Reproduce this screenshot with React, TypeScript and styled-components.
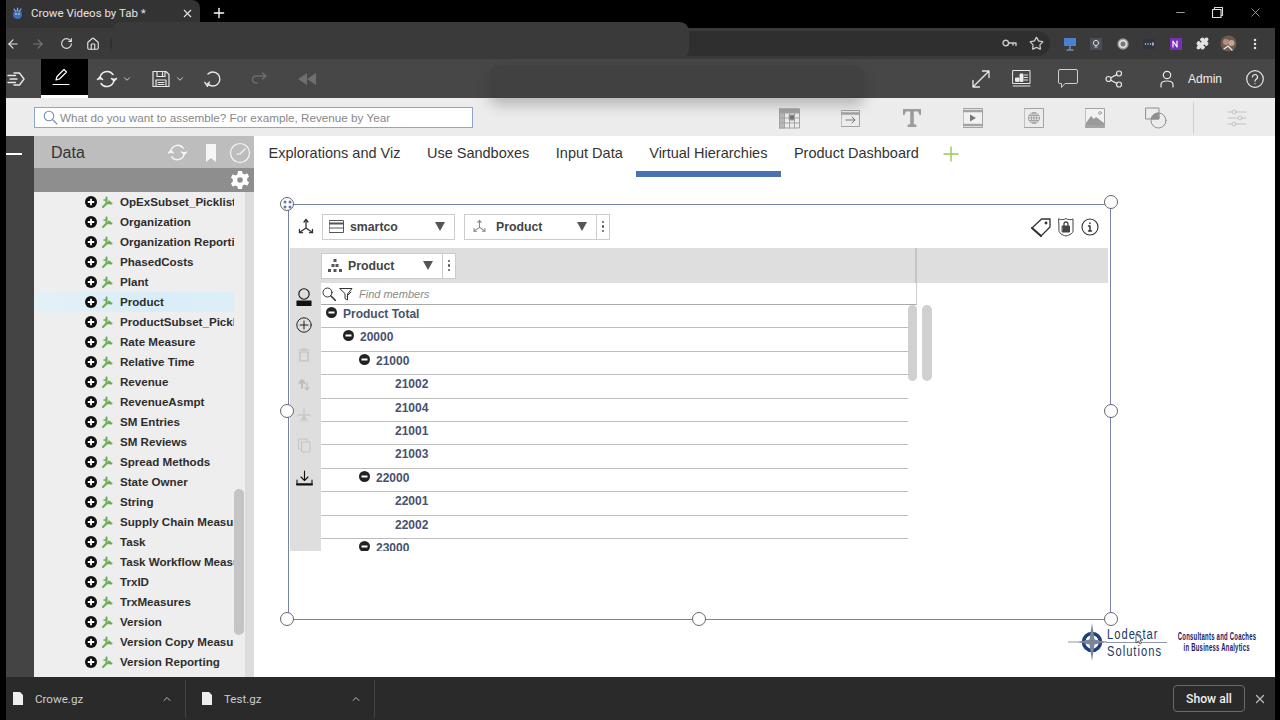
import React from "react";
import styled, { createGlobalStyle } from "styled-components";
import { ArrowLeft, ArrowRight, RotateCw, Home, Star, Puzzle, EllipsisVertical, Minus, X, Plus, ChevronDown, ChevronUp } from "lucide-react";

const Global = createGlobalStyle`
  html, body { margin: 0; padding: 0; background: #000; }
  * { box-sizing: border-box; }
  #root { width: 1280px; height: 720px; overflow: hidden; }
`;

const Page = styled.div`
  position: relative;
  width: 1280px; height: 720px; background: #000; overflow: hidden;
  font-family: "Liberation Sans", Arial, sans-serif;
  display: flex; flex-direction: column;
`;
const TabStrip = styled.div`
  height: 28px; padding-left: 6px; display: flex; align-items: stretch; color: #fff; flex: none;
`;
const BrowserTab = styled.div`
  width: 194px; height: 28px; background: #333; border-top-right-radius: 8px;
  display: flex; align-items: center; padding: 0 6px 2px 5px; font: 11.5px Roboto, "Liberation Sans", sans-serif; color: #e4e4e4;
`;
const TabTitle = styled.span` margin-left: 7px; flex: 1; white-space: nowrap; `;
const NewTab = styled.div` margin-left: 11px; display: flex; align-items: center; padding-bottom: 2px; `;
const WindowButtons = styled.div` margin-left: auto; display: flex; align-items: center; gap: 24px; padding: 0 17px 4px 0; color: #ddd; `;
const Frame = styled.div`
  flex: 1; padding: 0 5px 0 6px; display: flex; flex-direction: column; min-height: 0;
`;
const BrowserToolbar = styled.div`
  height: 31px; background: #3a3a3a; display: flex; align-items: center; flex: none; color: #ddd;
`;
const NavIcon = styled.div<{ $w: number; $dim?: boolean; $ml?: number }>`
  width: ${p => p.$w}px; margin-left: ${p => p.$ml ?? 0}px; display: flex; justify-content: center; align-items: center; flex: none;
  color: ${p => (p.$dim ? "#777" : "#e2e2e2")};
`;
const Omnibox = styled.div`
  width: 940px; height: 25px; background: #2f2f2f; border-radius: 13px; flex: none;
  display: flex; align-items: center; justify-content: flex-end; gap: 12px; padding-right: 6px; color: #ccc;
`;
const Extensions = styled.div` flex: 1; display: flex; align-items: center; `;

const AppBar = styled.div`
  height: 39px; background: #474747; display: flex; align-items: center; flex: none; color: #eee;
`;
const PenButton = styled.div`
  width: 47px; height: 39px; background: #000; border-bottom: 3px solid #fff; display: flex; align-items: center; padding-left: 10px; flex: none;
`;
const ToolSlot = styled.div<{ $ml?: number; $w?: number; $start?: boolean }>`
  margin-left: ${p => p.$ml ?? 0}px; width: ${p => (p.$w ? p.$w + "px" : "auto")}; flex: none;
  display: flex; align-items: center; justify-content: ${p => (p.$start ? "flex-start" : "center")}; color: #e8e8e8;
`;
const AdminLabel = styled.span` margin-left: 12px; width: 38px; font-size: 12px; color: #eee; `;

const SearchBar = styled.div`
  height: 38px; background: #ececec; display: flex; align-items: center; flex: none;
`;
const SearchInput = styled.div`
  margin-left: 28px; width: 439px; height: 21px; background: #fff; border: 1px solid #8fa6cc;
  display: flex; align-items: center; padding-left: 8px; gap: 2px; color: #888; font-size: 11.7px; white-space: nowrap; flex: none;
`;
const AddIcons = styled.div` margin-left: 286px; margin-top: 2px; display: flex; align-items: center; flex: none; `;
const AddSlot = styled.div` width: 61px; display: flex; justify-content: center; align-items: center; `;
const AddDivider = styled.div` width: 1px; height: 32px; background: #cfcfcf; margin-left: 7px; `;
const Body = styled.div` flex: 1; display: flex; min-height: 0; background: #fff; `;
const Rail = styled.div` width: 28px; background: #444; flex: none; padding-top: 17px; `;
const RailDash = styled.div` width: 16px; height: 2px; background: #fff; `;
const Sidebar = styled.div` width: 220px; flex: none; display: flex; flex-direction: column; background: #eee; `;
const SideHead = styled.div`
  height: 32px; background: #bdbdbd; display: flex; align-items: center; padding: 1px 3px 0 17px; font-size: 16px; color: #333; flex: none;
`;
const SideTitle = styled.span` flex: 1; `;
const SideIcons = styled.div` display: flex; align-items: center; color: #f6f6f6; `;
const SideSub = styled.div`
  height: 24px; background: #8e8e8e; display: flex; justify-content: flex-end; align-items: center; padding-right: 4px; flex: none;
`;
const SideBody = styled.div` position: relative; flex: 1; display: flex; min-height: 0; `;
const ItemList = styled.div` width: 200px; flex: none; overflow: hidden; `;
const Item = styled.div<{ $active?: boolean }>`
  height: 20px; display: flex; align-items: center; padding-left: 51px; overflow: hidden; white-space: nowrap;
  background: ${p => (p.$active ? "linear-gradient(90deg,#e4f1f7,#d9edf8 60%,#dceff9)" : "transparent")};
  font-size: 11.6px; font-weight: 700; color: #2d2d2d;
`;
const TreeMark = styled.span` margin-left: 4px; display: flex; `;
const ItemLabel = styled.span` margin-left: 7px; margin-bottom: 2px; `;
const ScrollArea = styled.div` width: 11px; flex: none; `;
const SideThumb = styled.div` margin-top: 297px; width: 10px; height: 146px; background: #c4c4c4; border-radius: 5px; `;
const Gutter = styled.div` width: 9px; background: #dcdcdc; flex: none; `;

const Main = styled.div` flex: 1; display: flex; flex-direction: column; min-width: 0; `;
const Tabs = styled.div` height: 41px; display: flex; padding-left: 1.25px; flex: none; `;
const TabItem = styled.div<{ $active?: boolean }>`
  padding: 9px 13.25px 0; font-size: 14.5px; color: #333; white-space: nowrap; height: 41px;
  border-bottom: ${p => (p.$active ? "6px solid #4a72b0" : "6px solid transparent")};
`;
const AddTab = styled.div` margin-left: 7px; padding-top: 6px; color: #9cc855; `;
const Canvas = styled.div` position: relative; flex: 1; `;
const Widget = styled.div`
  position: absolute; left: 34px; top: 27px; width: 823px; height: 416px;
  border: 1.5px solid #7484a8; background: #fff; padding-left: 1px;
  display: flex; flex-direction: column;
`;
const Handle = styled.div<{ $l: number; $t: number }>`
  position: absolute; left: ${p => p.$l}px; top: ${p => p.$t}px; width: 14px; height: 14px; border-radius: 50%;
  background: #fff; border: 1.3px solid #666; display: flex; align-items: center; justify-content: center;
`;
const WidgetHead = styled.div` height: 43px; display: flex; align-items: center; flex: none; padding-left: 7px; `;
const SelectBox = styled.div<{ $w: number; $ml?: number }>`
  width: ${p => p.$w}px; height: 26px; margin-left: ${p => p.$ml ?? 0}px; background: #fff; border: 1px solid #ccc;
  display: flex; align-items: center; font-size: 12.3px; font-weight: 700; color: #444; flex: none;
`;
const SelectIcon = styled.div<{ $w: number }>` width: ${p => p.$w}px; display: flex; justify-content: center; flex: none; `;
const SelectLabel = styled.span<{ $pad?: number }>` flex: 1; padding-left: ${p => p.$pad ?? 0}px; `;
const Caret = styled.div`
  width: 0; height: 0; border-left: 5px solid transparent; border-right: 5px solid transparent; border-top: 9px solid #555; margin-right: 9px; flex: none;
`;
const Kebab = styled.div`
  width: 13px; height: 100%; border-left: 1px solid #ccc; display: flex; flex-direction: column; align-items: center; justify-content: center; gap: 2px; flex: none;
  &::before, &::after, & > i { content: ""; display: block; width: 2.5px; height: 2.5px; background: #555; border-radius: 50%; }
`;
const HeadIcons = styled.div` margin-left: auto; margin-right: 11px; display: flex; align-items: center; gap: 5px; `;
const AxisBand = styled.div`
  height: 35px; width: 818px; background: #dedede; flex: none; padding-left: 31px; display: flex; align-items: center;
`;
const BandDivider = styled.div` margin-left: 459px; width: 2px; height: 35px; background: #c4c4c4; flex: none; `;
const WorkRow = styled.div` display: flex; height: 268px; flex: none; `;
const SideTools = styled.div`
  width: 31px; background: #dedede; flex: none; display: flex; flex-direction: column; align-items: center; padding-right: 3px;
`;
const ToolCell = styled.div`
  height: 30px; display: flex; align-items: center; justify-content: center; flex: none;
  &:first-child { height: 27px; }
  &:last-child { height: 33px; padding-top: 3px; }
`;
const TreeColumn = styled.div` width: 612px; flex: none; overflow: hidden; display: flex; flex-direction: column; `;
const FindRow = styled.div`
  height: 22px; width: 596px; flex: none; border-bottom: 1px solid #aaa; border-right: 1px solid #ccc; display: flex; align-items: center; font-size: 11px; font-style: italic; color: #8a8a8a;
`;
const FindLabel = styled.span` margin-left: 6px; `;
const FilterMark = styled.span` margin-left: 3px; display: flex; `;
const TreeBody = styled.div` display: flex; flex: 1; min-height: 0; `;
const TreeRows = styled.div` width: 587px; flex: none; `;
const TreeRow = styled.div<{ $pad: number }>`
  height: 23.4px; border-bottom: 1px solid #bdbdbd; display: flex; align-items: flex-start; padding: 2px 0 0 ${p => p.$pad}px;
  font-size: 12px; font-weight: 700; color: #47526e; gap: 6px;
`;
const Thumb = styled.div<{ $w: number; $ml?: number }>`
  width: ${p => p.$w}px; margin-left: ${p => p.$ml ?? 0}px; height: 76px; background: #d0d0d0; border-radius: 5px; flex: none;
`;
const Logo = styled.div` position: absolute; left: 814px; top: 446px; display: flex; align-items: center; `;
const LogoName = styled.div` width: 60px; display: flex; flex-direction: column; `;
const LogoLine = styled.span`
  display: block; font: 15.5px/16px "Liberation Sans", sans-serif; letter-spacing: 1.4px; color: #1a3a62; white-space: nowrap;
  transform: scaleX(.72); transform-origin: left center;
`;
const LogoRule = styled.div` height: 1px; background: #8d96aa; margin: 0 0 0 -1px; `;
const LogoTag = styled.div` margin-left: 10px; display: flex; flex-direction: column; align-items: center; width: 80px; `;
const TagLine = styled.span`
  font: 700 10px/11.5px "Liberation Sans", sans-serif; color: #1d1660; white-space: nowrap; transform: scaleX(.595); letter-spacing: .4px;
`;
const Pointer = styled.svg` position: absolute; left: 881px; top: 456px; `;

const Downloads = styled.div`
  height: 43px; background: #2a2a2a; flex: none; display: flex; align-items: center; color: #ccc; font: 11.6px Roboto, "Liberation Sans", sans-serif;
`;
const DownloadItem = styled.div<{ $w: number; $pad: number }>`
  width: ${p => p.$w}px; height: 38px; display: flex; align-items: center; padding-left: ${p => p.$pad}px; border-right: 1px solid #444; flex: none;
`;
const DlName = styled.span` margin-left: 12px; flex: 1; `;
const DlChevron = styled.div` margin-right: 12px; display: flex; color: #bbb; `;
const ShowAll = styled.div`
  margin-left: auto; width: 72px; height: 27px; border: 1px solid #6a6a6a; border-radius: 4px; display: flex; align-items: center; justify-content: center;
  font-weight: 500; font-size: 12.2px; color: #eee;
`;
const CloseDl = styled.div` margin: 0 8px 0 8px; display: flex; color: #bbb; `;
const Blob = styled.div<{ $l: number; $t: number; $w: number; $h: number; $bg: string }>`
  position: absolute; left: ${p => p.$l}px; top: ${p => p.$t}px; width: ${p => p.$w}px; height: ${p => p.$h}px;
  background: ${p => p.$bg}; border-radius: 9px;
`;
const BlobShadow = styled(Blob)` box-shadow: 0 8px 14px rgba(40,40,40,.28); `;
const Glyph = styled.svg` display: block; flex: none; `;

const S = (p: React.SVGProps<SVGSVGElement> & { s?: number; h?: number; c?: string; sw?: number }) => {
  const { s = 20, h, c = "currentColor", sw = 1.3, children, viewBox, ...r } = p;
  const ht = h ?? s;
  return <Glyph width={s} height={ht} viewBox={viewBox ?? `0 0 ${s} ${ht}`} fill="none" stroke={c} strokeWidth={sw} strokeLinecap="round" strokeLinejoin="round" {...(r as object)}>{children}</Glyph>;
};

const PlusDot = () => (
  <S s={12} viewBox="0 0 12 12" stroke="none"><circle cx="6" cy="6" r="6" fill="#111" stroke="none" /><path d="M6 2.8v6.4M2.8 6h6.4" stroke="#fff" strokeWidth="1.8" strokeLinecap="butt" /></S>
);
const MinusDot = () => (
  <S s={11} viewBox="0 0 11 11"><circle cx="5.5" cy="5.5" r="5.5" fill="#222" stroke="none" /><path d="M2.5 5.5h6" stroke="#fff" strokeWidth="2" strokeLinecap="butt" /></S>
);
const Tree = () => (
  <S s={12} h={13} viewBox="0 0 12 13" c="#6cab55" sw={2}><path d="M5.5 1.5v6L2 11M5.5 7l5 .5M8 5.5l2.2 2" /><path d="M3 4h2" strokeWidth="1.5" /></S>
);
const SyncGlyph = ({ s = 22, c = "#eee" }: { s?: number; c?: string }) => (
  <S s={s} viewBox="0 0 22 22" c={c} sw={1.5}>
    <path d="M4 10a7.2 7.2 0 0 1 13-3.5M18 12a7.2 7.2 0 0 1-13 3.5" />
    <path d="M1.5 11.5 4 9l2.5 2.5M15.5 10.5 18 13l2.5-2.5" fill={c} />
  </S>
);
const AxisGlyph = ({ s = 18, c = "#333" }: { s?: number; c?: string }) => (
  <S s={s} viewBox="0 0 18 18" c={c} sw={1.3}>
    <path d="M9 10V2M9 10l-6.5 4.5M9 10l6.5 4.5" /><path d="M7 4l2-2.5L11 4M2.5 11.5v3.2h3M15.5 11.5v3.2h-3" />
  </S>
);

const items = ["OpExSubset_Picklist", "Organization", "Organization Reporting", "PhasedCosts", "Plant", "Product", "ProductSubset_Picklist", "Rate Measure", "Relative Time", "Revenue", "RevenueAsmpt", "SM Entries", "SM Reviews", "Spread Methods", "State Owner", "String", "Supply Chain Measures", "Task", "Task Workflow Measures", "TrxID", "TrxMeasures", "Version", "Version Copy Measures", "Version Reporting"];
const rows: [string, number, boolean][] = [
  ["Product Total", 5, true], ["20000", 22, true], ["21000", 38, true], ["21002", 74, false], ["21004", 74, false], ["21001", 74, false], ["21003", 74, false],
  ["22000", 38, true], ["22001", 74, false], ["22002", 74, false], ["23000", 38, true],
];
const handles = [[-1, 0], [823, -2], [-1, 207], [823, 207], [-1, 415], [411, 415], [823, 415]];

const Grey = "#a3a3a3";

export default function App() {
  return (
    <Page>
      <Global />
      <TabStrip>
        <BrowserTab>
          <S s={13} viewBox="0 0 13 13" stroke="none"><circle cx="6.5" cy="7.5" r="4.5" fill="#3f6fb5" stroke="none" /><path d="M3 2l1.5 2M10 2 8.5 4M6.5 1v2.5" stroke="#8fb0dc" strokeWidth="1.2" /><circle cx="5" cy="7" r=".8" fill="#cfe" stroke="none" /><circle cx="8" cy="7" r=".8" fill="#cfe" stroke="none" /></S>
          <TabTitle>Crowe Videos by Tab *</TabTitle>
          <X size={13} strokeWidth={2} />
        </BrowserTab>
        <NewTab><Plus size={16} strokeWidth={2} /></NewTab>
        <WindowButtons>
          <Minus size={13} strokeWidth={1.3} />
          <S s={13} viewBox="0 0 13 13" sw={1.1}><path d="M3.5 3V1.5h8v8H10M1.5 3.5h8.5v8H1.5z" /></S>
          <X size={15} strokeWidth={1} />
        </WindowButtons>
      </TabStrip>
      <Frame>
        <BrowserToolbar>
          <NavIcon $w={14}><ArrowLeft size={14} /></NavIcon>
          <NavIcon $w={36} $dim><ArrowRight size={14} /></NavIcon>
          <NavIcon $w={20}><RotateCw size={13} /></NavIcon>
          <NavIcon $w={34}><Home size={14} /></NavIcon>
          <Omnibox>
            <S s={15} h={9} viewBox="0 0 15 9" sw={1.4}><circle cx="3.8" cy="4" r="2.8" /><path d="M6.600 4H14v2.500M11 4v2" /></S>
            <Star size={15} />
          </Omnibox>
          <Extensions>
            <NavIcon $w={27} $ml={6}><S s={14} viewBox="0 0 14 14" stroke="none"><rect x="1" y="1" width="12" height="8" fill="#4c7fcf" stroke="none" /><path d="M7 9v4M4 13h6" stroke="#6c8fc4" strokeWidth="1.5" /></S></NavIcon>
            <NavIcon $w={26}><S s={14} viewBox="0 0 14 14" sw={1}><rect x="1" y="1" width="12" height="12" fill="#4a4f57" stroke="none" /><circle cx="7" cy="6" r="2.6" stroke="#ddd" /><path d="M6 10h2" stroke="#ddd" /></S></NavIcon>
            <NavIcon $w={27}><S s={12} viewBox="0 0 12 12"><circle cx="6" cy="6" r="5" fill="#ddd" stroke="#999" /><circle cx="6" cy="6" r="2.5" fill="#777" stroke="none" /></S></NavIcon>
            <NavIcon $w={26}><S s={14} viewBox="0 0 14 14"><rect x="1" y="2" width="12" height="10" fill="#2e3442" stroke="none" /><path d="M3.5 7h.01M6 7h.01M8.5 7h.01M11 6v2" stroke="#ddd" strokeWidth="1.4" /></S></NavIcon>
            <NavIcon $w={27}><S s={14} viewBox="0 0 14 14"><rect x="1" y="1" width="12" height="12" fill="#7a2fb8" stroke="none" /><path d="M4 10V4l4 6V4" stroke="#fff" strokeWidth="1.2" /></S></NavIcon>
            <NavIcon $w={26}><Puzzle size={13} fill="#e4e4e4" /></NavIcon>
            <NavIcon $w={27}><S s={17} viewBox="0 0 17 17" stroke="none"><circle cx="8.5" cy="8.5" r="8" fill="#6d5a50" stroke="none" /><circle cx="6" cy="7" r="3" fill="#b8907a" stroke="none" /><circle cx="11.5" cy="8" r="3" fill="#c9a48c" stroke="none" /><path d="M4 14l4-3 4 4" stroke="#e8e8e8" strokeWidth="1.2" /></S></NavIcon>
            <NavIcon $w={26}><EllipsisVertical size={14} strokeWidth={2.4} /></NavIcon>
          </Extensions>
        </BrowserToolbar>
        <AppBar>
          <ToolSlot $ml={1} $w={34} $start>
            <S s={18} viewBox="0 0 18 18" sw={1.4}><path d="M7 3h5.500L17 9l-4.500 6H7M1 5.500h7.500M3 9h7M1 12.500h7.500" /></S>
          </ToolSlot>
          <PenButton>
            <S s={20} viewBox="0 0 20 20" c="#fff" sw={1.2}><path d="M5 13l1-3.500L13 2.500l2.500 2.500-7 7zM2 17.500h16" /></S>
          </PenButton>
          <ToolSlot $ml={8}><SyncGlyph /></ToolSlot>
          <ToolSlot $ml={4}><ChevronDown size={10} /></ToolSlot>
          <ToolSlot $ml={20}>
            <S s={18} viewBox="0 0 18 18" sw={1.2}><path d="M1 1.500h13l3 3v12H1zM5 1.500v5h8v-5M10.500 2.500v3M4 10h10v6.500H4zM6 12.500h6M6 14.500h6" /></S>
          </ToolSlot>
          <ToolSlot $ml={5}><ChevronDown size={10} /></ToolSlot>
          <ToolSlot $ml={18}>
            <S s={20} viewBox="0 0 20 20" sw={1.4}><path d="M4.500 14.500A7 7 0 1 0 5 5M1.800 13.300l2.700 4 1.800-4.200" /></S>
          </ToolSlot>
          <ToolSlot $ml={28}>
            <S s={18} viewBox="0 0 18 18" c="#6e6e6e" sw={1.4}><path d="M14 6H5a3.500 3.500 0 0 0 0 7h1M11.500 3 15 6l-3.500 3" /></S>
          </ToolSlot>
          <ToolSlot $ml={28}>
            <S s={20} h={14} viewBox="0 0 20 14" stroke="none"><path d="M10 1v12L1 7zM19 1v12L10 7z" fill="#6e6e6e" stroke="none" /></S>
          </ToolSlot>
          <ToolSlot $ml={654}>
            <S s={20} viewBox="0 0 20 20" sw={1.3}><path d="M2 18 18 2M11.500 2H18v6.500M2 11.500V18h6.500" /></S>
          </ToolSlot>
          <ToolSlot $ml={20.5}>
            <S s={19} viewBox="0 0 19 19" sw={1}><path d="M1 1.500h17v13H1zM1 17h17" /><path d="M3.500 12V9H7v3zM8 12V5h3v7z" fill="#eee" /><path d="M12.500 6h3M12.500 8.500h3M12.500 11h3" /></S>
          </ToolSlot>
          <ToolSlot $ml={26}>
            <S s={22} viewBox="0 0 22 22" c="#cfcfcf" sw={1}><path d="M3 1.500h16a1.500 1.500 0 0 1 1.500 1.500v11a1.500 1.500 0 0 1-1.500 1.500H8l-3.500 4V15.500H3A1.500 1.500 0 0 1 1.500 14V3A1.500 1.500 0 0 1 3 1.500z" /></S>
          </ToolSlot>
          <ToolSlot $ml={26.5}>
            <S s={18} viewBox="0 0 18 18" sw={1.2}><circle cx="3.500" cy="9" r="2.500" /><circle cx="14" cy="3.500" r="2.500" /><circle cx="14" cy="14.500" r="2.500" /><path d="M5.800 7.800 11.800 4.600M5.800 10.200l6 3.200" /></S>
          </ToolSlot>
          <ToolSlot $ml={35}>
            <S s={18} viewBox="0 0 18 18" sw={1.2}><circle cx="9" cy="5" r="3.700" /><path d="M3 17v-2.500C3 12 5 11 9 11s6 1 6 3.500V17" /></S>
          </ToolSlot>
          <AdminLabel>Admin</AdminLabel>
          <ToolSlot $ml={20}>
            <S s={18} viewBox="0 0 18 18" sw={1.2}><circle cx="9" cy="9" r="8.300" /><path d="M6.500 7a2.500 2.500 0 1 1 3.700 2.200c-.8.500-1.200 1-1.200 2M9 13.500v.2" /></S>
          </ToolSlot>
        </AppBar>
        <SearchBar>
          <SearchInput>
            <S s={15} viewBox="0 0 15 15" c="#6f8fc0" sw={1.1}><circle cx="6" cy="6" r="4.800" /><path d="m10 10 4 4" /></S>
            <span>What do you want to assemble? For example, Revenue by Year</span>
          </SearchInput>
          <AddIcons>
            <AddSlot><S s={21} viewBox="0 0 21 21" c={Grey} sw={1}><rect x=".5" y="1" width="20" height="19" /><rect x=".5" y="1" width="20" height="4" fill={Grey} /><path d="M.5 10h20M.5 15h20M5.500 5v15M10.500 5v15M15.500 5v15M.5 1v19" /><rect x="10.500" y="7" width="5" height="5" fill="#777" /><rect x=".5" y="5" width="5" height="15" fill={Grey} opacity=".7" /></S></AddSlot>
            <AddSlot><S s={19} h={17} viewBox="0 0 19 17" c={Grey} sw={1}><rect x=".5" y=".5" width="18" height="16" /><path d="M.5 3.500h18" strokeWidth="2.500" /><path d="M5 10h9M11 7l3 3-3 3" stroke="#777" /></S></AddSlot>
            <AddSlot><S s={20} viewBox="0 0 20 20" stroke="none"><path d="M1 1h18v6h-1.500L16 3.500h-4.200V16l2.700 1V19H5.500v-2l2.700-1V3.500H4L2.500 7H1z" fill="#9c9c9c" stroke="none" /></S></AddSlot>
            <AddSlot><S s={20} viewBox="0 0 20 20" c={Grey} sw={1}><rect x=".5" y=".5" width="19" height="19" fill="#f2f2f2" /><path d="M1 3h18M1 17h18" strokeWidth="2.500" strokeDasharray="2 1.500" /><path d="M7 6.500v7l6-3.500z" fill="#777" stroke="none" /></S></AddSlot>
            <AddSlot><S s={20} viewBox="0 0 20 20" c={Grey} sw={1}><rect x=".5" y=".5" width="19" height="19" /><circle cx="10" cy="10" r="5.500" /><path d="M10 4.500v11M4.500 10h11M5.500 7.500h9M5.500 12.500h9" /><ellipse cx="10" cy="10" rx="2.500" ry="5.500" /></S></AddSlot>
            <AddSlot><S s={20} viewBox="0 0 20 20" c={Grey} sw={1}><rect x=".5" y=".5" width="19" height="19" fill="#f2f2f2" /><path d="M1 15 6 8l3 3 2-2 8 6v2H1z" fill="#9a9a9a" stroke="none" /><path d="M1 18h18" strokeWidth="2" /><circle cx="15" cy="5" r="1.400" /></S></AddSlot>
            <AddSlot><S s={22} viewBox="0 0 22 22" c="#8f8f8f" sw={1}><rect x="1" y="1" width="13" height="11" /><circle cx="13.500" cy="13.500" r="7.500" /><path d="M13.500 6a7.500 7.500 0 0 0-7.500 6h7.500z" fill="#8f8f8f" /></S></AddSlot>
            <AddDivider />
            <ToolSlot $ml={33}><S s={20} viewBox="0 0 20 20" c="#c2c2c2" sw={1}><path d="M1 4h18M1 10h18M1 16h18" /><circle cx="7" cy="4" r="2" fill="#ececec" /><circle cx="13" cy="10" r="2" fill="#ececec" /><circle cx="7" cy="16" r="2" fill="#ececec" /></S></ToolSlot>
          </AddIcons>
        </SearchBar>
        <Body>
          <Rail><RailDash /></Rail>
          <Sidebar>
            <SideHead>
              <SideTitle>Data</SideTitle>
              <SideIcons>
                <SyncGlyph s={21} c="#f6f6f6" />
                <ToolSlot $ml={17}><S s={12} h={18} viewBox="0 0 12 18" stroke="none"><path d="M1 0h10v18l-5-4-5 4z" fill="#f6f6f6" stroke="none" /></S></ToolSlot>
                <ToolSlot $ml={12}><S s={22} viewBox="0 0 22 22" c="#f6f6f6" sw={1.2}><circle cx="11" cy="11" r="9.500" /><path d="M11 12l5-5M11 12H8" /></S></ToolSlot>
              </SideIcons>
            </SideHead>
            <SideSub>
              <S s={20} viewBox="0 0 20 20" stroke="none"><path d="M8 1h4l.6 2.500 2.200 1 2.300-1.300 2 3.300-1.900 1.700v2.600l1.900 1.700-2 3.300-2.300-1.300-2.200 1L12 19H8l-.6-2.500-2.200-1-2.300 1.300-2-3.300 1.900-1.700V9.200L.9 7.500l2-3.300 2.300 1.300 2.200-1z" fill="#fff" stroke="none" /><circle cx="10" cy="10" r="2.800" fill="#8e8e8e" stroke="none" /></S>
            </SideSub>
            <SideBody>
              <ItemList>
                {items.map(name => (
                  <Item key={name} $active={name === "Product"}>
                    <PlusDot />
                    <TreeMark><Tree /></TreeMark>
                    <ItemLabel>{name}</ItemLabel>
                  </Item>
                ))}
              </ItemList>
              <ScrollArea><SideThumb /></ScrollArea>
              <Gutter />
            </SideBody>
          </Sidebar>
          <Main>
            <Tabs>
              <TabItem>Explorations and Viz</TabItem>
              <TabItem>Use Sandboxes</TabItem>
              <TabItem>Input Data</TabItem>
              <TabItem $active>Virtual Hierarchies</TabItem>
              <TabItem>Product Dashboard</TabItem>
              <AddTab><Plus size={24} strokeWidth={1.4} /></AddTab>
            </Tabs>
            <Canvas>
              <Widget>
                <WidgetHead>
                  <AxisGlyph />
                  <SelectBox $w={133} $ml={7}>
                    <SelectIcon $w={27}><S s={15} h={13} viewBox="0 0 15 13" c="#555" sw={1}><rect x=".5" y=".5" width="14" height="12" /><path d="M.5 3.500h14" strokeWidth="2" /><path d="M.5 8h14" /></S></SelectIcon>
                    <SelectLabel>smartco</SelectLabel>
                    <Caret />
                  </SelectBox>
                  <SelectBox $w={146} $ml={9}>
                    <SelectIcon $w={28}><AxisGlyph s={15} c="#888" /></SelectIcon>
                    <SelectLabel $pad={3}>Product</SelectLabel>
                    <Caret />
                    <Kebab><i /></Kebab>
                  </SelectBox>
                  <HeadIcons>
                    <S s={20} viewBox="0 0 20 20" c="#333" sw={1.3}><path d="M1 11 10.500 2H19v8l-9 9z" /><path d="M1 11l9 8" strokeWidth="2" /><circle cx="15" cy="6" r=".8" /></S>
                    <S s={20} viewBox="0 0 20 20" c="#444" sw={1}><path d="M3 2c2 1 5 1 7-.5 2 1.500 5 1.500 7 .5v12c0 2-3 4-7 5-4-1-7-3-7-5z" /><rect x="6.500" y="9" width="7" height="6" fill="#444" /><path d="M8 9V7a2 2 0 0 1 4 0v2" strokeWidth="1.300" /></S>
                    <S s={18} viewBox="0 0 18 18" c="#333" sw={1.100}><circle cx="9" cy="9" r="8" /><path d="M9 5v.6M7.500 8H9v5M7.500 13h3" strokeWidth="1.500" /></S>
                  </HeadIcons>
                </WidgetHead>
                <AxisBand>
                  <SelectBox $w={135}>
                    <SelectIcon $w={26}><S s={14} h={13} viewBox="0 0 14 13" stroke="none"><g fill="#555" stroke="none"><rect x="5.500" y="0" width="3" height="3" /><rect x="3.500" y="5" width="3" height="3" /><rect x="7.500" y="5" width="3" height="3" /><rect x="0" y="10" width="3" height="3" /><rect x="5.500" y="10" width="3" height="3" /><rect x="11" y="10" width="3" height="3" /></g></S></SelectIcon>
                    <SelectLabel>Product</SelectLabel>
                    <Caret />
                    <Kebab><i /></Kebab>
                  </SelectBox>
                  <BandDivider />
                </AxisBand>
                <WorkRow>
                  <SideTools>
                    <ToolCell><S s={16} h={18} viewBox="0 0 16 18" c="#111" sw={1.1}><circle cx="8" cy="6" r="5.200" /><rect x="1" y="13" width="14" height="4.500" fill="#111" /></S></ToolCell>
                    <ToolCell><S s={16} viewBox="0 0 16 16" c="#222" sw={1}><circle cx="8" cy="8" r="7.200" /><path d="M8 4v8M4 8h8" /></S></ToolCell>
                    <ToolCell><S s={12} h={14} viewBox="0 0 12 14" c="#bdbdbd" sw={1.200}><path d="M2 4h8v9H2zM1 2h10" /><path d="M4 1h4" /></S></ToolCell>
                    <ToolCell><S s={14} viewBox="0 0 14 14" c="#bdbdbd" sw={1.200}><path d="M5 10V3M2.500 5 5 2l2.500 3" strokeWidth="2" /><path d="M10 5v7M8 9.500 10 12l2-2.500" /></S></ToolCell>
                    <ToolCell><S s={14} viewBox="0 0 14 14" c="#bdbdbd" sw={1}><path d="M7 1v12M1 7h5M8 7h5M4 13 7 8l3 5" /></S></ToolCell>
                    <ToolCell><S s={13} h={15} viewBox="0 0 13 15" c="#c4c4c4" sw={1}><rect x="1" y="1" width="8" height="10" /><rect x="4" y="4" width="8" height="10" fill="#dedede" /></S></ToolCell>
                    <ToolCell><S s={17} h={16} viewBox="0 0 17 16" c="#111" sw={1.100}><path d="M8.500 1v9M5 7l3.500 3.500L12 7M1 10v4h15v-4" /><path d="M1 14.500h15" strokeWidth="2" /></S></ToolCell>
                  </SideTools>
                  <TreeColumn>
                    <FindRow>
                      <ToolSlot $w={15}><S s={14} viewBox="0 0 14 14" c="#333" sw={1}><circle cx="5.500" cy="5.500" r="4.500" /><path d="m9 9 4.500 4.500" strokeWidth="1.500" /></S></ToolSlot>
                      <FilterMark><S s={14} viewBox="0 0 14 14" c="#333" sw={1}><path d="M1 1.500h12L8.500 7v6L6 11.500V7z" /><path d="M8 9l4-4" /></S></FilterMark>
                      <FindLabel>Find members</FindLabel>
                    </FindRow>
                    <TreeBody>
                      <TreeRows>
                        {rows.map(([t, pad, open]) => (
                          <TreeRow key={t} $pad={pad}>{open && <MinusDot />}<span>{t}</span></TreeRow>
                        ))}
                      </TreeRows>
                      <Thumb $w={9} />
                      <Thumb $w={10} $ml={5} />
                    </TreeBody>
                  </TreeColumn>
                </WorkRow>
              </Widget>
              {handles.map(([l, t], i) => (
                <Handle key={i} $l={27 + l} $t={20 + t}>
                  {i === 0 && <S s={9} viewBox="0 0 9 9" stroke="none"><g fill="#5f78ad" stroke="none"><circle cx="2" cy="2" r="1.500" /><circle cx="7" cy="2" r="1.500" /><circle cx="2" cy="7" r="1.500" /><circle cx="7" cy="7" r="1.500" /></g></S>}
                </Handle>
              ))}
              <Logo>
                <S s={39} h={38} viewBox="0 0 39 38" stroke="none">
                  <path d="M0 19h39" stroke="#8d96aa" strokeWidth="1" />
                  <circle cx="24" cy="19" r="8.500" stroke="#1d3f78" strokeWidth="3.500" fill="none" />
                  <path d="M24 0l2.500 16.500L38 19l-11.500 2.500L24 38l-2.500-16.500L10 19l11.500-2.500z" fill="#7b8598" stroke="none" />
                </S>
                <LogoName>
                  <LogoLine>Lodestar</LogoLine>
                  <LogoRule />
                  <LogoLine>Solutions</LogoLine>
                </LogoName>
                <LogoTag>
                  <TagLine>Consultants and Coaches</TagLine>
                  <TagLine>in Business Analytics</TagLine>
                </LogoTag>
              </Logo>
              <Pointer width="9" height="12" viewBox="0 0 9 12"><path d="M1 1v9l2.500-2 1.500 3 1.500-1-1.500-3H8z" fill="#fff" stroke="#333" strokeWidth=".8" /></Pointer>
            </Canvas>
          </Main>
        </Body>
        <Downloads>
          <DownloadItem $w={180} $pad={7}>
            <S s={10} h={13} viewBox="0 0 10 13" stroke="none"><path d="M0 0h7l3 3v10H0z" fill="#eee" stroke="none" /></S>
            <DlName>Crowe.gz</DlName>
            <DlChevron><ChevronUp size={12} /></DlChevron>
          </DownloadItem>
          <DownloadItem $w={189} $pad={16}>
            <S s={10} h={13} viewBox="0 0 10 13" stroke="none"><path d="M0 0h7l3 3v10H0z" fill="#eee" stroke="none" /></S>
            <DlName>Test.gz</DlName>
            <DlChevron><ChevronUp size={12} /></DlChevron>
          </DownloadItem>
          <ShowAll>Show all</ShowAll>
          <CloseDl><X size={14} strokeWidth={2.2} /></CloseDl>
        </Downloads>
      </Frame>
      <Blob $l={112} $t={22} $w={577} $h={37} $bg="#3a3a3a" />
      <BlobShadow $l={490} $t={65} $w={374} $h={32} $bg="#414141" />
    </Page>
  );
}
